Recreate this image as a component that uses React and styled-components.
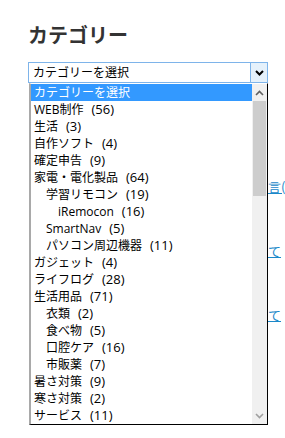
import React from "react";
import styled, { createGlobalStyle } from "styled-components";

const GlobalStyle = createGlobalStyle`
  html, body {
    margin: 0;
    padding: 0;
    background: #fff;
    overflow: hidden;
  }
  body {
    font-family: "Noto Sans CJK JP", sans-serif;
  }
`;

const Page = styled.div`
  display: flex;
  width: 285px;
  height: 438px;
  overflow: hidden;
  padding-left: 28px;
  box-sizing: border-box;
`;

const Sidebar = styled.aside`
  flex: 0 0 240px;
  padding-top: 20px;
`;

const Heading = styled.h2`
  margin: 0 0 12px;
  font-family: "Noto Sans CJK JP", sans-serif;
  font-size: 20px;
  font-weight: 700;
  line-height: 30px;
  color: #333;
`;

const SelectWrap = styled.div`
  position: relative;
  width: 240px;
`;

const SelectBox = styled.div`
  display: flex;
  height: 21px;
  box-sizing: border-box;
  border: 1px solid #7eb4ea;
  background: #fff;
`;

const SelectValue = styled.div`
  flex: 1;
  padding-left: 4px;
  font-family: "Open Sans", "Noto Sans CJK JP", sans-serif;
  font-size: 12px;
  line-height: 19px;
  color: #000;
  white-space: nowrap;
`;

const SelectButton = styled.div`
  flex: 0 0 16px;
  display: flex;
  align-items: center;
  justify-content: center;
  border-left: 1px solid #7eb4ea;
  background: #e5f1fb;
`;

const DropList = styled.div`
  position: absolute;
  top: 21px;
  left: 1px;
  right: 0;
  height: 342px;
  box-sizing: border-box;
  display: flex;
  border-left: 2px solid #a9a9a9;
  border-right: 1px solid #000;
  border-bottom: 1px solid #000;
  border-top: 1px solid #fff;
  background: #fff;
`;

const Options = styled.ul`
  flex: 1;
  margin: 0;
  padding: 0;
  list-style: none;
  overflow: hidden;
`;

const Option = styled.li`
  height: 17px;
  padding-left: ${(p) => 3 + p.$level * 12}px;
  font-family: "Open Sans", "Noto Sans CJK JP", sans-serif;
  font-size: 12px;
  line-height: 17px;
  white-space: nowrap;
  color: ${(p) => (p.$selected ? "#fff" : "#000")};
  background: ${(p) => (p.$selected ? "#3399ff" : "transparent")};
`;

const Count = styled.span`
  margin-left: 8px;
  font-family: "Open Sans", sans-serif;
  font-size: 13px;
`;

const Scrollbar = styled.div`
  flex: 0 0 15px;
  display: flex;
  flex-direction: column;
  background: #f0f0f0;
`;

const ScrollArrow = styled.div`
  height: 17px;
  display: flex;
  align-items: center;
  justify-content: center;
`;

const ScrollThumb = styled.div`
  height: 95px;
  margin: 0 1px;
  background: #cdcdcd;
`;

const ScrollTrack = styled.div`
  flex: 1;
`;

const Main = styled.main`
  flex: 1;
  min-width: 0;
  padding-top: 177px;
  display: flex;
  flex-direction: column;
  gap: 44px;
`;

const PostLink = styled.a`
  display: block;
  font-family: "Noto Sans CJK JP", sans-serif;
  font-size: 13px;
  line-height: 20px;
  color: #1a88c9;
  white-space: nowrap;
  text-decoration: underline;
`;

const Chevron = ({ up, color = "#000", weight = 2 }) => (
  <svg width="9" height="6" viewBox="0 0 9 6">
    <polyline
      points={up ? "1,5 4.5,1.5 8,5" : "1,1 4.5,4.5 8,1"}
      fill="none"
      stroke={color}
      strokeWidth={weight}
    />
  </svg>
);

const categories = [
  { name: "WEB制作", count: 56, level: 0 },
  { name: "生活", count: 3, level: 0 },
  { name: "自作ソフト", count: 4, level: 0 },
  { name: "確定申告", count: 9, level: 0 },
  { name: "家電・電化製品", count: 64, level: 0 },
  { name: "学習リモコン", count: 19, level: 1 },
  { name: "iRemocon", count: 16, level: 2 },
  { name: "SmartNav", count: 5, level: 1 },
  { name: "パソコン周辺機器", count: 11, level: 1 },
  { name: "ガジェット", count: 4, level: 0 },
  { name: "ライフログ", count: 28, level: 0 },
  { name: "生活用品", count: 71, level: 0 },
  { name: "衣類", count: 2, level: 1 },
  { name: "食べ物", count: 5, level: 1 },
  { name: "口腔ケア", count: 16, level: 1 },
  { name: "市販薬", count: 7, level: 1 },
  { name: "暑さ対策", count: 9, level: 0 },
  { name: "寒さ対策", count: 2, level: 0 },
  { name: "サービス", count: 11, level: 0 },
];

const posts = ["言(", "て", "て"];

const App = () => (
  <>
    <GlobalStyle />
    <Page>
      <Sidebar>
        <Heading>カテゴリー</Heading>
        <SelectWrap>
          <SelectBox>
            <SelectValue>カテゴリーを選択</SelectValue>
            <SelectButton>
              <Chevron />
            </SelectButton>
          </SelectBox>
          <DropList>
            <Options>
              <Option $level={0} $selected>
                カテゴリーを選択
              </Option>
              {categories.map((c) => (
                <Option key={c.name} $level={c.level}>
                  {c.name}
                  <Count>({c.count})</Count>
                </Option>
              ))}
            </Options>
            <Scrollbar>
              <ScrollArrow>
                <Chevron up color="#606060" weight={1.6} />
              </ScrollArrow>
              <ScrollThumb />
              <ScrollTrack />
              <ScrollArrow>
                <Chevron color="#a0a0a0" weight={1.6} />
              </ScrollArrow>
            </Scrollbar>
          </DropList>
        </SelectWrap>
      </Sidebar>
      <Main>
        {posts.map((p, i) => (
          <PostLink key={i} href="#">
            {p}
          </PostLink>
        ))}
      </Main>
    </Page>
  </>
);

export default App;
